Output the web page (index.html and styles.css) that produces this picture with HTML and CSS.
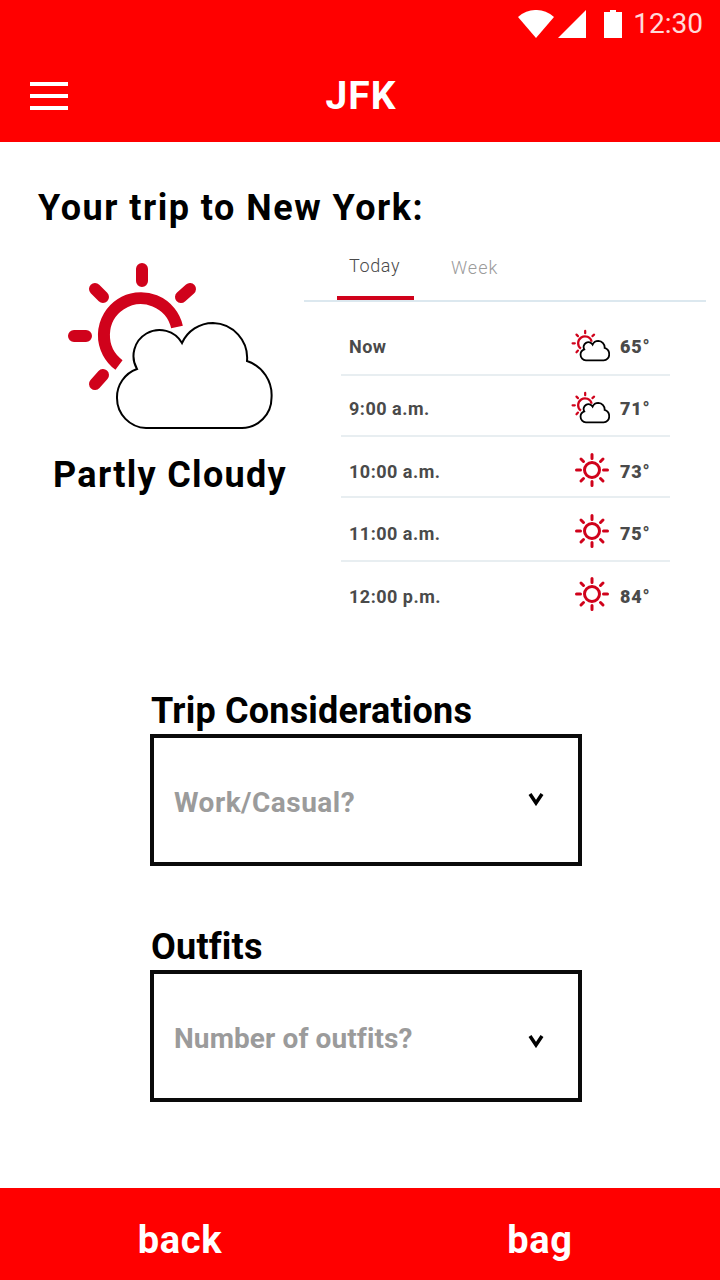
FILE: index.html
```html
<!DOCTYPE html>
<html>
<head>
  <title>JFK</title>
  <link rel="stylesheet" href="styles.css">
</head>
<body>
  <svg class="defs" width="0" height="0">
    <symbol id="partly" viewBox="60 258 216 174">
      <g fill="none" stroke="#d0021b" stroke-width="12" stroke-linecap="round">
        <path d="M142 269V281M74 336H86M95 289L103 297M190 289L181 297M95 384L103 375"/>
        <path d="M119 365A37 37 0 1 1 177 327" stroke-linecap="butt"/>
      </g>
      <path class="cloud" d="M146 428A30 30 0 0 1 117 398A30 30 0 0 1 137 369A25 25 0 0 1 182 343A34 34 0 0 1 213 323A35 35 0 0 1 247 361A36 36 0 0 1 271.500 398A30 30 0 0 1 242 428Z"/>
    </symbol>
    <symbol id="sunny" viewBox="0 0 34 34">
      <circle cx="17" cy="17" r="7.500" fill="none" stroke="#d0021b" stroke-width="3"/>
      <path d="M17 1.500V5.500M17 28.500V32.500M1.500 17H5.500M28.500 17H32.500M6 6L8.500 8.500M28 6L25.500 8.500M6 28L8.500 25.500M28 28L25.500 25.500" stroke="#d0021b" stroke-width="3" stroke-linecap="round"/>
    </symbol>
    <symbol id="chevron" viewBox="0 0 16 14">
      <path d="M2 2L8 11L14 2" fill="none" stroke="#000" stroke-width="3.500"/>
    </symbol>
  </svg>

  <header class="top">
    <div class="status">
      <svg class="status-icon wifi" viewBox="0 0 36 28"><path d="M0 7A26.600 26.600 0 0 1 36 7L18 28Z" fill="#fff"/></svg>
      <svg class="status-icon signal" viewBox="0 0 28 28"><path d="M28 0V28H0Z" fill="#fff"/></svg>
      <svg class="status-icon battery" viewBox="0 0 18 28"><path d="M0 2H6V0H12V2H18V28H0Z" fill="#fff"/></svg>
      <span class="time">12:30</span>
    </div>
    <div class="toolbar">
      <div class="menu"><span></span><span></span><span></span></div>
      <h1>JFK</h1>
    </div>
  </header>

  <main>
    <h2 class="trip">Your trip to New York:</h2>
    <div class="weather">
      <div class="current">
        <svg class="current-icon"><use href="#partly"/></svg>
        <p>Partly Cloudy</p>
      </div>
      <div class="forecast">
        <div class="tabs">
          <span class="tab active">Today</span>
          <span class="tab">Week</span>
        </div>
        <ul class="hours">
          <li><span>Now</span><svg class="ico-partly"><use href="#partly"/></svg><b>65°</b></li>
          <li><span>9:00 a.m.</span><svg class="ico-partly"><use href="#partly"/></svg><b>71°</b></li>
          <li><span>10:00 a.m.</span><svg class="ico-sun"><use href="#sunny"/></svg><b>73°</b></li>
          <li><span>11:00 a.m.</span><svg class="ico-sun"><use href="#sunny"/></svg><b>75°</b></li>
          <li><span>12:00 p.m.</span><svg class="ico-sun"><use href="#sunny"/></svg><b>84°</b></li>
        </ul>
      </div>
    </div>

    <section class="field first">
      <h3>Trip Considerations</h3>
      <div class="select"><span>Work/Casual?</span><svg class="chev"><use href="#chevron"/></svg></div>
    </section>
    <section class="field">
      <h3>Outfits</h3>
      <div class="select tight"><span>Number of outfits?</span><svg class="chev low"><use href="#chevron"/></svg></div>
    </section>
  </main>

  <footer class="bottom">
    <a>back</a>
    <a>bag</a>
  </footer>
</body>
</html>
```

FILE: styles.css
```css
* {
  box-sizing: border-box;
}

body {
  margin: 0;
  height: 100vh;
  display: flex;
  flex-direction: column;
  font-family: Roboto, "Liberation Sans", sans-serif;
  background: #fff;
  color: #000;
  overflow: hidden;
}

.defs {
  position: absolute;
}

.cloud {
  fill: #fff;
  stroke: #000;
  stroke-width: inherit;
  vector-effect: non-scaling-stroke;
}

.top {
  background: #f00;
  height: 142px;
  color: #fff;
}

.status {
  height: 48px;
  display: flex;
  align-items: flex-start;
  padding: 10px 17px 0 0;
  justify-content: flex-end;
}

.status-icon {
  display: block;
  height: 28px;
}

.wifi {
  width: 36px;
  margin-right: 4px;
}

.signal {
  width: 28px;
  margin-right: 18px;
}

.battery {
  width: 18px;
  margin-right: 11px;
}

.time {
  font-size: 28px;
  line-height: 28px;
  color: #fff;
  opacity: .85;
}

.toolbar {
  height: 94px;
  position: relative;
  display: flex;
  align-items: center;
  justify-content: center;
  padding: 2px 0 0 2px;
}

.toolbar h1 {
  margin: 0;
  font-size: 39px;
  font-weight: 700;
  letter-spacing: 1px;
}

.menu {
  position: absolute;
  left: 30px;
  top: 34px;
  width: 38px;
  display: flex;
  flex-direction: column;
  gap: 8px;
}

.menu span {
  height: 4px;
  background: #fff;
}

main {
  flex: 1;
}

.trip {
  margin: 44px 0 0 38px;
  font-size: 36px;
  line-height: 44px;
  font-weight: 700;
  letter-spacing: 1.500px;
}

.weather {
  display: flex;
  margin-top: 15px;
}

.current {
  width: 304px;
}

.current-icon {
  display: block;
  width: 216px;
  height: 174px;
  margin: 13px 0 0 60px;
  stroke-width: 2;
}

.current p {
  margin: 21px 0 0;
  width: 340px;
  text-align: center;
  font-size: 36px;
  line-height: 44px;
  font-weight: 700;
  letter-spacing: 1.300px;
}

.forecast {
  width: 402px;
}

.tabs {
  height: 57px;
  border-bottom: 2px solid #dce8ef;
  display: flex;
  padding-left: 33px;
}

.tab {
  font-size: 18px;
  font-weight: 300;
  letter-spacing: 1px;
  color: #9b9b9b;
  padding-top: 12px;
  margin-left: 37px;
}

.tab.active {
  width: 77px;
  margin-left: 0;
  padding: 10px 0 0 12px;
  color: #4a4a4a;
  border-bottom: 4px solid #d0021b;
  font-weight: 300;
  letter-spacing: .6px;
  height: 55px;
}

.hours {
  list-style: none;
  margin: 13px 0 0 37px;
  padding: 0;
  width: 329px;
}

.hours li {
  height: 61px;
  padding: 0 20px 0 8px;
  display: flex;
  align-items: center;
  border-bottom: 2px solid #e8eef1;
  font-size: 18px;
  font-weight: 700;
  color: #4a4a4a;
  letter-spacing: .5px;
}

.hours li:nth-child(2) {
  padding-top: 2px;
}

.hours li:nth-child(3) {
  padding-top: 6px;
}

.hours li:nth-child(4) {
  height: 64px;
  padding-top: 4px;
}

.hours li:last-child {
  height: 64px;
  border-bottom: 0;
}

.hours span {
  flex: 1;
  margin-top: 4px;
}

.hours b {
  width: 30px;
  margin: 4px 0 0 10px;
  letter-spacing: .8px;
}

.ico-partly {
  width: 40px;
  height: 34px;
  stroke-width: 1.800;
}

.ico-sun {
  width: 34px;
  height: 34px;
  margin-right: 1px;
}

.field {
  width: 432px;
  margin: 59px 0 0 150px;
}

.field.first {
  margin-top: 63px;
}

.field h3 {
  margin: 0 0 1px;
  padding-left: 1px;
  font-size: 36px;
  line-height: 44px;
  font-weight: 700;
  letter-spacing: .2px;
}

.select {
  height: 132px;
  border: 4px solid #0a0a0a;
  display: flex;
  align-items: center;
  justify-content: space-between;
  padding: 4px 34px 0 20px;
  font-size: 28px;
  font-weight: 700;
  color: #9b9b9b;
  letter-spacing: .5px;
}

.select.tight {
  letter-spacing: .1px;
}

.chev {
  width: 16px;
  height: 14px;
  margin-bottom: 6px;
}

.chev.low {
  margin: 6px 0 0;
}

.bottom {
  height: 92px;
  background: #f00;
  display: flex;
  align-items: center;
  padding-top: 12px;
}

.bottom a {
  flex: 1;
  text-align: center;
  color: #fff;
  font-size: 38px;
  font-weight: 700;
  letter-spacing: .7px;
}
```
